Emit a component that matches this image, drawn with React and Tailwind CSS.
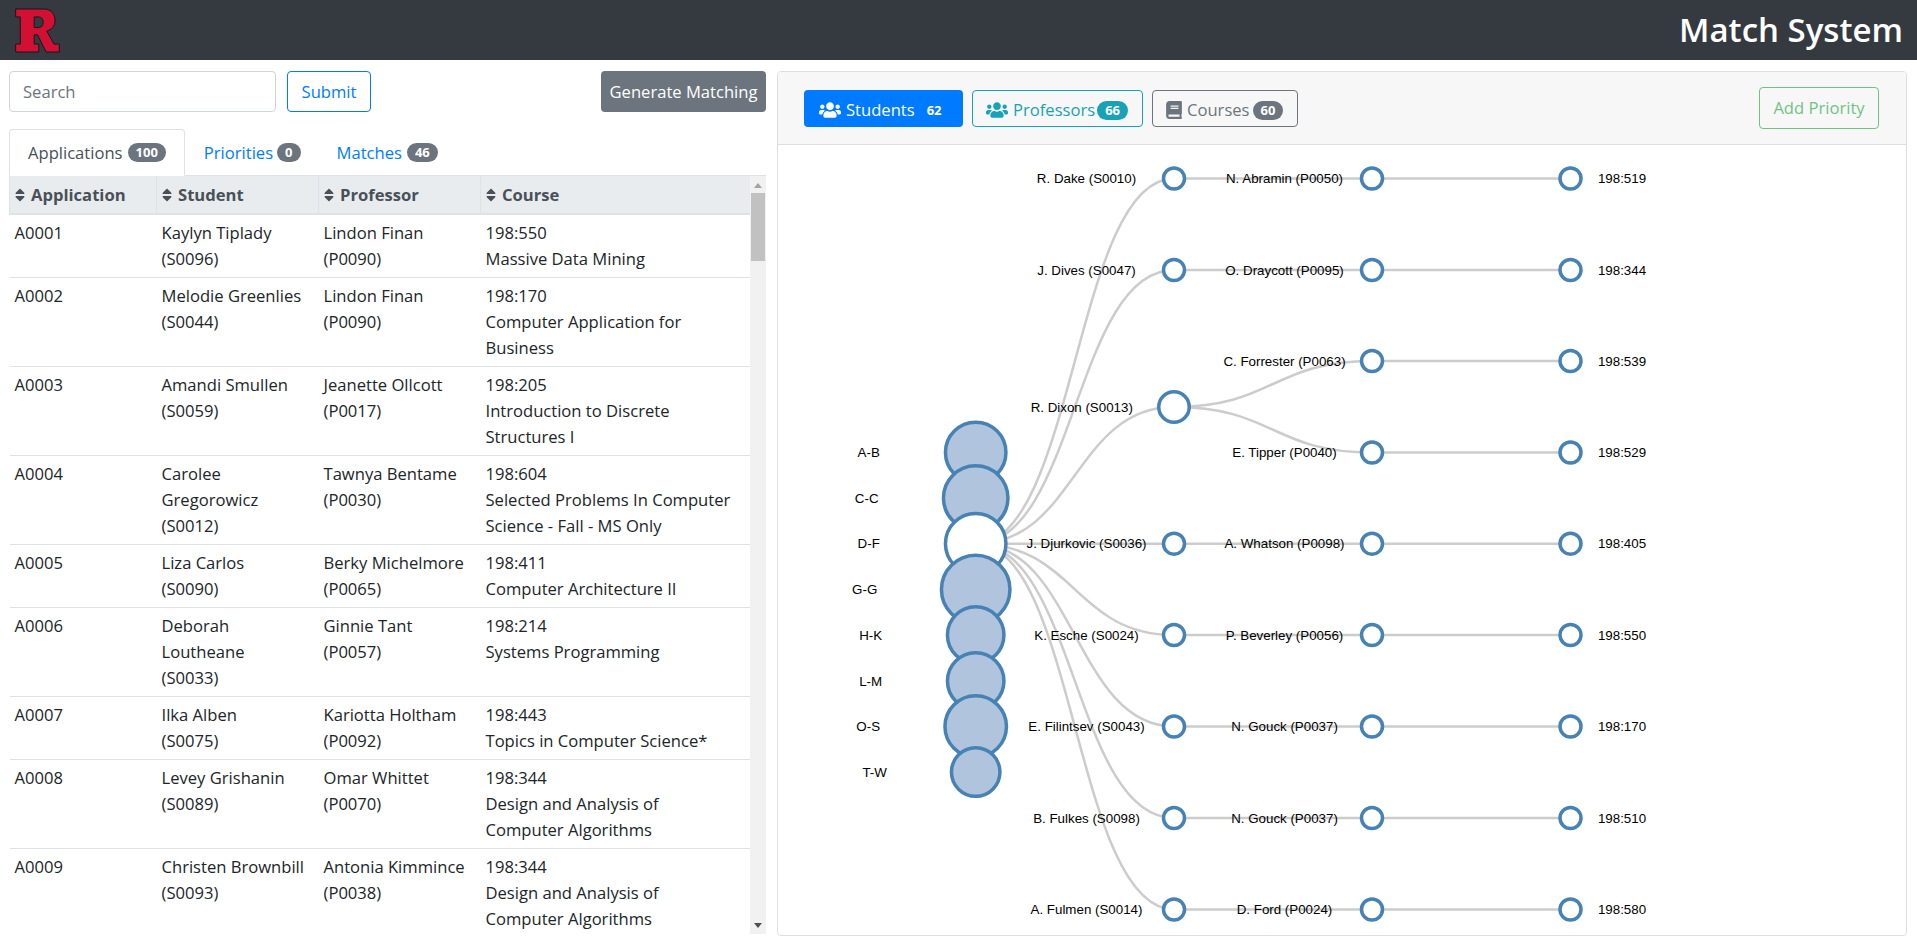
import React from "react";
import { FaSort, FaUsers, FaBook } from "react-icons/fa";

const rows = [
  { id: "A0001", student: ["Kaylyn Tiplady", "(S0096)"], prof: ["Lindon Finan", "(P0090)"], course: ["198:550", "Massive Data Mining"] },
  { id: "A0002", student: ["Melodie Greenlies", "(S0044)"], prof: ["Lindon Finan", "(P0090)"], course: ["198:170", "Computer Application for", "Business"] },
  { id: "A0003", student: ["Amandi Smullen", "(S0059)"], prof: ["Jeanette Ollcott", "(P0017)"], course: ["198:205", "Introduction to Discrete", "Structures I"] },
  { id: "A0004", student: ["Carolee", "Gregorowicz", "(S0012)"], prof: ["Tawnya Bentame", "(P0030)"], course: ["198:604", "Selected Problems In Computer", "Science - Fall - MS Only"] },
  { id: "A0005", student: ["Liza Carlos", "(S0090)"], prof: ["Berky Michelmore", "(P0065)"], course: ["198:411", "Computer Architecture II"] },
  { id: "A0006", student: ["Deborah", "Loutheane", "(S0033)"], prof: ["Ginnie Tant", "(P0057)"], course: ["198:214", "Systems Programming"] },
  { id: "A0007", student: ["Ilka Alben", "(S0075)"], prof: ["Kariotta Holtham", "(P0092)"], course: ["198:443", "Topics in Computer Science*"] },
  { id: "A0008", student: ["Levey Grishanin", "(S0089)"], prof: ["Omar Whittet", "(P0070)"], course: ["198:344", "Design and Analysis of", "Computer Algorithms"] },
  { id: "A0009", student: ["Christen Brownbill", "(S0093)"], prof: ["Antonia Kimmince", "(P0038)"], course: ["198:344", "Design and Analysis of", "Computer Algorithms"] },
];

const groups = [
  { label: "A-B", y: 452.5, r: 30.25 },
  { label: "C-C", y: 498, r: 32.25 },
  { label: "D-F", y: 543.7, r: 30.25, open: true },
  { label: "G-G", y: 589.5, r: 34.25 },
  { label: "H-K", y: 635, r: 28.25 },
  { label: "L-M", y: 681, r: 28.25 },
  { label: "O-S", y: 726.5, r: 30.75 },
  { label: "T-W", y: 772, r: 24.25 },
];

const students = [
  { label: "R. Dake (S0010)", y: 178.5 },
  { label: "J. Dives (S0047)", y: 270 },
  { label: "R. Dixon (S0013)", y: 407, r: 15.25 },
  { label: "J. Djurkovic (S0036)", y: 543.7 },
  { label: "K. Esche (S0024)", y: 635 },
  { label: "E. Filintsev (S0043)", y: 726.5 },
  { label: "B. Fulkes (S0098)", y: 818 },
  { label: "A. Fulmen (S0014)", y: 909.5 },
];

const profs = [
  { label: "N. Abramin (P0050)", course: "198:519", y: 178.5, from: 178.5 },
  { label: "O. Draycott (P0095)", course: "198:344", y: 270, from: 270 },
  { label: "C. Forrester (P0063)", course: "198:539", y: 361, from: 407 },
  { label: "E. Tipper (P0040)", course: "198:529", y: 452.5, from: 407 },
  { label: "A. Whatson (P0098)", course: "198:405", y: 543.7, from: 543.7 },
  { label: "P. Beverley (P0056)", course: "198:550", y: 635, from: 635 },
  { label: "N. Gouck (P0037)", course: "198:170", y: 726.5, from: 726.5 },
  { label: "N. Gouck (P0037)", course: "198:510", y: 818, from: 818 },
  { label: "D. Ford (P0024)", course: "198:580", y: 909.5, from: 909.5 },
];

const X1 = 975.7;
const X2 = 1174;
const X3 = 1372;
const X4 = 1570.5;

function diagonal(x0, y0, x1, y1) {
  const m = (x0 + x1) / 2;
  return `M${x0},${y0}C${m},${y0} ${m},${y1} ${x1},${y1}`;
}

function Tree() {
  const openGroup = groups[2];
  return (
    <svg width="1128" height="790" viewBox="778 145 1128 790" className="block">
      <g fill="none" stroke="#ccc" strokeWidth="2.5">
        {students.map((s) => (
          <path key={s.label} d={diagonal(X1, openGroup.y, X2, s.y)} />
        ))}
        {profs.map((p) => (
          <path key={p.course} d={diagonal(X2, p.from, X3, p.y)} />
        ))}
        {profs.map((p) => (
          <path key={p.course} d={diagonal(X3, p.y, X4, p.y)} />
        ))}
      </g>
      <g fontSize="13.33" fontFamily="'Liberation Sans', Arial, sans-serif" fill="#000" textAnchor="middle">
        {groups.map((g) => (
          <g key={g.label}>
            <circle cx={X1} cy={g.y} r={g.r} fill={g.open ? "#fff" : "#b0c4de"} stroke="#4682b4" strokeWidth="3.5" />
            <text x={X1 - g.r - 76.75} y={g.y} dy="0.35em">{g.label}</text>
          </g>
        ))}
        {students.map((s) => {
          const r = s.r || 10.5;
          return (
            <g key={s.label}>
              <circle cx={X2} cy={s.y} r={r} fill="#fff" stroke="#4682b4" strokeWidth="3.5" />
              <text x={X2 - r - 77} y={s.y} dy="0.35em">{s.label}</text>
            </g>
          );
        })}
        {profs.map((p) => (
          <g key={p.course}>
            <circle cx={X3} cy={p.y} r="10.5" fill="#fff" stroke="#4682b4" strokeWidth="3.5" />
            <text x={X3 - 87.5} y={p.y} dy="0.35em">{p.label}</text>
            <circle cx={X4} cy={p.y} r="10.5" fill="#fff" stroke="#4682b4" strokeWidth="3.5" />
            <text x={X4 + 51.5} y={p.y} dy="0.35em">{p.course}</text>
          </g>
        ))}
      </g>
    </svg>
  );
}

function Logo() {
  return (
    <svg width="45" height="45" viewBox="-2 -2 136 134">
      <path
        fillRule="evenodd"
        d="M0 0H85C110 0 119 18 119 36C119 52 109 62 94 67L116 106H132V130H92L66 78H56V106H70V130H0V106H14V24H0ZM56 24V56H70C80 56 83 48 83 40C83 30 78 24 68 24Z"
        fill="#d21034"
        stroke="#14171a"
        strokeWidth="3"
      />
    </svg>
  );
}

function Badge({ className, children }) {
  return (
    <span className={`inline-block rounded-full px-[8px] text-[13px] leading-[19px] h-[19px] font-bold text-white ${className}`}>
      {children}
    </span>
  );
}

function Th({ children, width }) {
  return (
    <th className={`${width} border border-t-0 border-[#dee2e6] border-b-2 bg-[#e9ecef] px-[5px] py-0 h-[38px] text-left font-bold text-[#495057]`}>
      <span className="flex items-center gap-[6px] whitespace-nowrap">
        <FaSort className="w-[10px] h-[16px] shrink-0" />
        {children}
      </span>
    </th>
  );
}

function Cell({ lines }) {
  return (
    <td className="pl-[5px] pr-0 py-[5px] align-top whitespace-nowrap">
      {lines.map((l) => (
        <div key={l}>{l}</div>
      ))}
    </td>
  );
}

function Scrollbar() {
  return (
    <div className="w-[16px] shrink-0 bg-[#f1f1f1] flex flex-col items-center">
      <svg width="8" height="5" viewBox="0 0 8 5" className="mt-[7px]">
        <path d="M4 0L8 5H0Z" fill="#a3a3a3" />
      </svg>
      <div className="w-[14px] h-[68px] bg-[#c1c1c1] mt-[5px]" />
      <svg width="8" height="5" viewBox="0 0 8 5" className="mt-auto mb-[6px]">
        <path d="M0 0H8L4 5Z" fill="#505050" />
      </svg>
    </div>
  );
}

export default function App() {
  return (
    <div className="h-screen overflow-hidden bg-white text-[16.6px] leading-[26px] text-[#212529] font-['Open_Sans','Noto_Sans',sans-serif]">
      <header className="h-[60px] bg-[#343a40] flex items-center justify-between pl-[15px] pr-[14px]">
        <Logo />
        <h1 className="text-[33px] leading-[60px] font-semibold text-white">Match System</h1>
      </header>

      <main className="flex gap-[11px] pl-[9px] pt-[11px]">
        <section className="w-[757px] shrink-0 flex flex-col h-[863px]">
          <div className="flex items-stretch h-[41px]">
            <input
              placeholder="Search"
              className="w-[267px] rounded border border-[#ced4da] px-[13px] outline-none placeholder:text-[#6c757d]"
            />
            <button className="ml-[11px] w-[84px] rounded border border-[#007bff] text-[#007bff]">Submit</button>
            <button className="ml-auto w-[165px] rounded bg-[#6c757d] text-white whitespace-nowrap">Generate Matching</button>
          </div>

          <div className="mt-[17px] h-[47px] flex border-b border-[#dee2e6] shrink-0">
            <div className="h-[47px] flex items-center gap-[5px] pl-[18px] pr-[18px] rounded-t border border-[#dee2e6] border-b-white bg-white text-[#495057]">
              Applications <Badge className="bg-[#6c757d]">100</Badge>
            </div>
            <div className="h-[47px] flex items-center gap-[4px] pl-[19px] pr-[17px] text-[#007bff]">
              Priorities <Badge className="bg-[#6c757d]">0</Badge>
            </div>
            <div className="h-[47px] flex items-center gap-[5px] px-[19px] text-[#007bff]">
              Matches <Badge className="bg-[#6c757d]">46</Badge>
            </div>
          </div>

          <div className="flex flex-1 min-h-0 overflow-hidden">
            <div className="w-[741px] shrink-0 overflow-hidden">
              <table className="w-[741px] table-fixed border-collapse">
                <thead>
                  <tr>
                    <Th width="w-[147px]">Application</Th>
                    <Th width="w-[162px]">Student</Th>
                    <Th width="w-[162px]">Professor</Th>
                    <Th width="w-[270px]">Course</Th>
                  </tr>
                </thead>
                <tbody>
                  {rows.map((r) => (
                    <tr key={r.id} className="border-b border-[#dee2e6]">
                      <Cell lines={[r.id]} />
                      <Cell lines={r.student} />
                      <Cell lines={r.prof} />
                      <Cell lines={r.course} />
                    </tr>
                  ))}
                </tbody>
              </table>
            </div>
            <Scrollbar />
          </div>
        </section>

        <section className="w-[1130px] shrink-0 h-[865px] rounded border border-[#dfdfdf] flex flex-col overflow-hidden">
          <div className="h-[73px] shrink-0 bg-[#f7f7f7] border-b border-[#dfdfdf] flex items-center pl-[26px] pr-[27px]">
            <button className="w-[159px] h-[37px] pl-[15px] pt-[4px] rounded bg-[#007bff] text-white flex items-center gap-[5px]">
              <FaUsers className="w-[22px] h-[18px]" />
              Students
              <span className="ml-[7px] text-[13px] font-bold">62</span>
            </button>
            <button className="ml-[9px] w-[171px] h-[37px] pl-[13px] pt-[4px] rounded border border-[#17a2b8] text-[#17a2b8] flex items-center gap-[5px]">
              <FaUsers className="w-[22px] h-[18px]" />
              Professors
              <Badge className="bg-[#17a2b8] -ml-[3px]">66</Badge>
            </button>
            <button className="ml-[9px] w-[146px] h-[37px] pl-[13px] pt-[4px] rounded border border-[#6c757d] text-[#6c757d] flex items-center gap-[5px]">
              <FaBook className="w-[16px] h-[18px]" />
              Courses
              <Badge className="bg-[#6c757d] -ml-[2px]">60</Badge>
            </button>
            <button className="ml-auto w-[120px] h-[42px] rounded border border-[#28a745] text-[#28a745] opacity-65">Add Priority</button>
          </div>
          <div className="flex-1 min-h-0">
            <Tree />
          </div>
        </section>
      </main>
    </div>
  );
}
